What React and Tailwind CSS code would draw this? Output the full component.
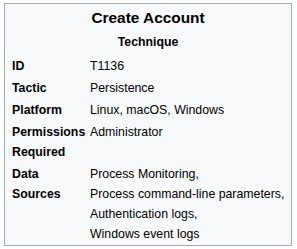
import React from 'react';

const rows = [
  { label: 'ID', value: ['T1136'] },
  { label: 'Tactic', value: ['Persistence'] },
  { label: 'Platform', value: ['Linux, macOS, Windows'] },
  { label: 'Permissions Required', value: ['Administrator'] },
  {
    label: 'Data Sources',
    value: [
      'Process Monitoring,',
      'Process command-line parameters,',
      'Authentication logs,',
      'Windows event logs',
    ],
  },
];

const App = () => {
  return (
    <div className="min-h-screen bg-white pl-[4px] pt-[3px] font-['Liberation_Sans',Arial,sans-serif] text-black">
      <div className="w-[288px] h-[243px] border border-[#a2a9b1] bg-[#f8f9fa] overflow-hidden">
        {/* Header */}
        <div className="pt-[4px] text-center text-[15.4px] font-bold leading-[20px]">Create Account</div>
        <div className="mt-[4px] text-center text-[12.32px] font-bold leading-[20px]">Technique</div>

        {/* Details */}
        <div className="mt-[3px] pl-[7px] text-[12.32px] leading-[20px]">
          {rows.map((row) => (
            <div key={row.label} className="grid grid-cols-[78px_1fr] py-[1px]">
              <div className="font-bold pr-[4px]">{row.label}</div>
              <div>
                {row.value.map((line) => (
                  <div key={line}>{line}</div>
                ))}
              </div>
            </div>
          ))}
        </div>
      </div>
    </div>
  );
};

export default App;
